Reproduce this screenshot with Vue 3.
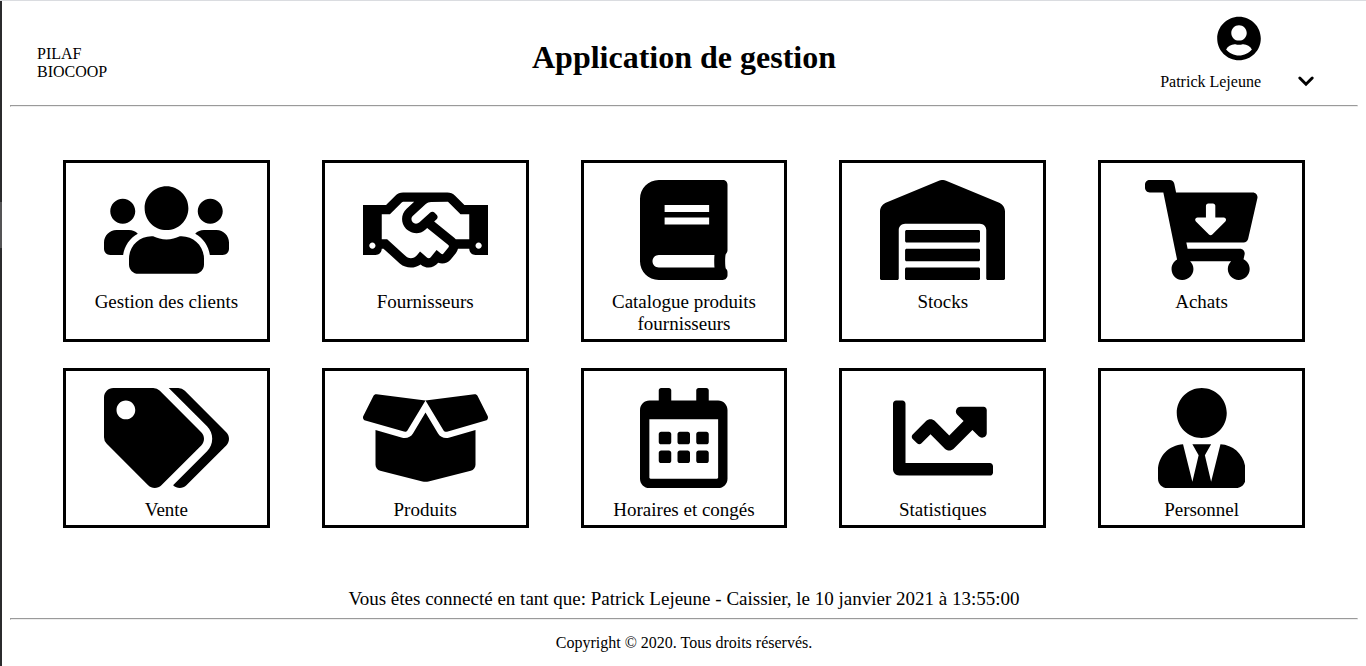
<script setup>
const tiles = [
  {
    label: 'Gestion des clients',
    box: '0 0 640 512',
    path: 'M96 224c35.3 0 64-28.7 64-64s-28.7-64-64-64-64 28.7-64 64 28.7 64 64 64zm448 0c35.3 0 64-28.7 64-64s-28.7-64-64-64-64 28.7-64 64 28.7 64 64 64zm32 32h-64c-17.6 0-33.5 7.1-45.1 18.6 40.3 22.1 68.9 62 75.1 109.4h66c17.7 0 32-14.3 32-32v-32c0-35.3-28.7-64-64-64zm-256 0c61.9 0 112-50.1 112-112S381.9 32 320 32 208 82.1 208 144s50.1 112 112 112zm76.8 32h-8.3c-20.8 10-43.9 16-68.5 16s-47.6-6-68.5-16h-8.3C179.6 288 128 339.6 128 403.2V432c0 26.5 21.5 48 48 48h288c26.5 0 48-21.5 48-48v-28.8c0-63.6-51.6-115.2-115.2-115.2zm-223.7-13.4C161.5 263.1 145.6 256 128 256H64c-35.3 0-64 28.7-64 64v32c0 17.7 14.3 32 32 32h65.9c6.3-47.4 34.9-87.3 75.2-109.4z',
  },
  {
    label: 'Fournisseurs',
    box: '0 0 640 512',
    path: 'M519.2 127.9l-47.6-47.6A56.252 56.252 0 0 0 432 64H205.2c-14.8 0-29.1 5.9-39.6 16.3L118 127.9H0v255.7h64c17.6 0 31.8-14.2 31.9-31.7h9.1l84.6 76.4c30.9 25.1 73.8 25.7 105.6 3.8 12.5 10.8 26 15.9 41.1 15.9 18.2 0 35.3-7.4 48.8-24 22.1 8.7 48.2 2.6 64-16.8l26.2-32.3c5.6-6.9 9.1-14.8 10.9-23h57.9c.1 17.5 14.4 31.7 31.9 31.7h64V127.9H519.2zM48 351.6c-8.8 0-16-7.2-16-16s7.2-16 16-16 16 7.2 16 16c0 8.9-7.2 16-16 16zm390-6.9l-26.1 32.2c-2.8 3.4-7.8 4-11.3 1.2l-23.9-19.4-30 36.5c-6 7.3-15 4.8-18 2.4l-36.8-31.5-15.6 19.2c-13.9 17.1-39.2 19.7-55.3 6.6l-97.3-88H96V175.8h41.9l61.7-61.6c2-.8 3.7-1.5 5.7-2.3H262l-38.7 35.5c-29.4 26.9-31.1 72.3-4.4 101.3 14.8 16.2 61.2 41.2 101.5 4.4l8.2-7.5 108.2 87.8c3.4 2.8 3.9 7.9 1.2 11.3zm106-40.8h-69.2c-2.3-2.8-4.9-5.4-7.7-7.7l-102.7-83.4 12.5-11.4c6.5-6 7-16.1 1-22.6L367 167.1c-6-6.5-16.1-6.9-22.6-1l-55.2 50.6c-9.5 8.7-25.7 9.4-34.6 0-9.3-9.9-8.5-25.1 1.2-33.9l65.6-60.2c7.4-6.8 17-10.5 27-10.5l83.7-.2c2.1 0 4.1.8 5.5 2.3l61.7 61.6H544v128zm48 47.7c-8.8 0-16-7.2-16-16s7.2-16 16-16 16 7.2 16 16c0 8.9-7.2 16-16 16z',
  },
  {
    label: 'Catalogue produits fournisseurs',
    box: '0 0 448 512',
    path: 'M448 360V24c0-13.3-10.7-24-24-24H96C43 0 0 43 0 96v320c0 53 43 96 96 96h328c13.3 0 24-10.7 24-24v-16c0-7.5-3.5-14.3-8.9-18.7-4.2-15.4-4.2-59.3 0-74.7 5.4-4.3 8.9-11.1 8.9-18.6zM126 128h228v36H126v-36zm0 64h228v36H126v-36zm255.4 256H96c-17.7 0-32-14.3-32-32 0-17.6 14.4-32 32-32h285.4c-1.9 17.1-1.9 46.9 0 64z',
  },
  {
    label: 'Stocks',
    box: '0 0 640 512',
    path: 'M504 352H136.4c-4.4 0-8 3.6-8 8l-.1 48c0 4.4 3.6 8 8 8H504c4.4 0 8-3.6 8-8v-48c0-4.4-3.6-8-8-8zm0 96H136.1c-4.4 0-8 3.6-8 8l-.1 48c0 4.4 3.6 8 8 8h368c4.4 0 8-3.6 8-8v-48c0-4.4-3.6-8-8-8zm0-192H136.6c-4.4 0-8 3.6-8 8l-.1 48c0 4.4 3.6 8 8 8H504c4.4 0 8-3.6 8-8v-48c0-4.4-3.6-8-8-8zm106.5-139L338.4 3.7a48.15 48.15 0 0 0-36.9 0L29.5 117C11.7 124.5 0 141.9 0 161.3V504c0 4.4 3.6 8 8 8h80c4.4 0 8-3.6 8-8V256c0-17.6 14.6-32 32.6-32h382.8c18 0 32.6 14.4 32.6 32v248c0 4.4 3.6 8 8 8h80c4.4 0 8-3.6 8-8V161.3c0-19.4-11.7-36.8-29.5-44.3z',
  },
  {
    label: 'Achats',
    box: '0 0 576 512',
    path: 'M504.717 320H211.572l6.545 32h268.418c15.401 0 26.816 14.301 23.403 29.319l-5.517 24.276C523.112 414.668 536 433.828 536 456c0 31.202-25.519 56.444-56.824 55.994-29.823-.429-54.35-24.631-55.155-54.447-.44-16.287 6.085-31.049 16.803-41.548H231.176C241.553 426.165 248 440.326 248 456c0 31.813-26.528 57.431-58.67 55.938-28.54-1.325-51.751-24.385-53.251-52.917-1.158-22.034 10.436-41.455 28.051-51.586L93.883 64H24C10.745 64 0 53.255 0 40V24C0 10.745 10.745 0 24 0h102.529c11.401 0 21.228 8.021 23.513 19.19L159.208 64H551.99c15.401 0 26.816 14.301 23.403 29.319l-47.273 208C525.637 312.246 515.923 320 504.717 320zM403.029 192H360v-60c0-6.627-5.373-12-12-12h-24c-6.627 0-12 5.373-12 12v60h-43.029c-10.691 0-16.045 12.926-8.485 20.485l67.029 67.029c4.686 4.686 12.284 4.686 16.971 0l67.029-67.029c7.559-7.559 2.205-20.485-8.486-20.485z',
  },
  {
    label: 'Vente',
    box: '0 0 640 512',
    path: 'M497.941 225.941L286.059 14.059A48 48 0 0 0 252.118 0H48C21.49 0 0 21.49 0 48v204.118a48 48 0 0 0 14.059 33.941l211.882 211.882c18.744 18.745 49.136 18.746 67.882 0l204.118-204.118c18.745-18.745 18.745-49.137 0-67.882zM112 160c-26.51 0-48-21.49-48-48s21.49-48 48-48 48 21.49 48 48-21.49 48-48 48zm513.941 133.823L421.823 497.941c-18.745 18.745-49.137 18.745-67.882 0l-.36-.36L527.64 323.522c16.999-16.999 26.36-39.6 26.36-63.64s-9.362-46.641-26.36-63.64L331.397 0h48.721a48 48 0 0 1 33.941 14.059l211.882 211.882c18.745 18.745 18.745 49.137 0 67.882z',
  },
  {
    label: 'Produits',
    box: '0 0 640 512',
    path: 'M425.7 256c-16.9 0-32.8-9-41.4-23.4L320 126l-64.2 106.6c-8.7 14.5-24.6 23.5-41.5 23.5-4.5 0-9-.6-13.3-1.9L64 215v178c0 14.7 10 27.5 24.2 31l216.2 54.1c10.2 2.5 20.9 2.5 31 0L551.8 424c14.2-3.6 24.2-16.4 24.2-31V215l-137 39.1c-4.3 1.3-8.8 1.9-13.3 1.9zm212.6-112.2L586.8 41c-3.1-6.2-9.8-9.8-16.7-8.9L320 64l91.7 152.1c3.8 6.3 11.4 9.3 18.5 7.3l197.9-56.5c9.9-2.9 14.7-13.9 10.2-23.1zM53.2 41L1.7 143.8c-4.6 9.2.3 20.2 10.1 23l197.9 56.5c7.1 2 14.7-1 18.5-7.3L320 64 69.8 32.1c-6.9-.8-13.5 2.7-16.6 8.9z',
  },
  {
    label: 'Horaires et congés',
    box: '0 0 448 512',
    path: 'M148 288h-40c-6.6 0-12-5.4-12-12v-40c0-6.6 5.4-12 12-12h40c6.6 0 12 5.4 12 12v40c0 6.6-5.4 12-12 12zm96 0h-40c-6.6 0-12-5.4-12-12v-40c0-6.6 5.4-12 12-12h40c6.6 0 12 5.4 12 12v40c0 6.6-5.4 12-12 12zm96 0h-40c-6.6 0-12-5.4-12-12v-40c0-6.6 5.4-12 12-12h40c6.6 0 12 5.4 12 12v40c0 6.6-5.4 12-12 12zm-192 96h-40c-6.6 0-12-5.4-12-12v-40c0-6.6 5.4-12 12-12h40c6.6 0 12 5.4 12 12v40c0 6.6-5.4 12-12 12zm96 0h-40c-6.6 0-12-5.4-12-12v-40c0-6.6 5.4-12 12-12h40c6.6 0 12 5.4 12 12v40c0 6.6-5.4 12-12 12zm96 0h-40c-6.6 0-12-5.4-12-12v-40c0-6.6 5.4-12 12-12h40c6.6 0 12 5.4 12 12v40c0 6.6-5.4 12-12 12zM400 64h-48V12c0-6.6-5.4-12-12-12h-40c-6.6 0-12 5.4-12 12v52H160V12c0-6.6-5.4-12-12-12h-40c-6.6 0-12 5.4-12 12v52H48C21.5 64 0 85.5 0 112v352c0 26.5 21.5 48 48 48h352c26.5 0 48-21.5 48-48V112c0-26.5-21.5-48-48-48zm-6 400H54c-3.3 0-6-2.7-6-6V160h352v298c0 3.3-2.7 6-6 6z',
  },
  {
    label: 'Statistiques',
    box: '0 0 512 512',
    path: 'M496 384H64V80c0-8.84-7.16-16-16-16H16C7.16 64 0 71.16 0 80v336c0 17.67 14.33 32 32 32h464c8.84 0 16-7.16 16-16v-32c0-8.84-7.16-16-16-16zM464 96H345.94c-21.38 0-32.09 25.85-16.97 40.97l32.4 32.4L288 242.75l-73.37-73.37c-12.5-12.5-32.76-12.5-45.25 0l-68.69 68.69c-6.25 6.25-6.25 16.38 0 22.63l22.62 22.62c6.25 6.25 16.38 6.25 22.63 0L192 237.25l73.37 73.37c12.5 12.5 32.76 12.5 45.25 0l96-96 32.4 32.4c15.12 15.12 40.97 4.41 40.97-16.97V112c.01-8.84-7.15-16-15.99-16z',
  },
  {
    label: 'Personnel',
    box: '0 0 448 512',
    path: 'M224 256c70.7 0 128-57.3 128-128S294.7 0 224 0 96 57.3 96 128s57.3 128 128 128zm95.8 32.6L272 480l-32-136 32-56h-96l32 56-32 136-47.8-191.4C56.9 292 0 350.3 0 422.4V464c0 26.5 21.5 48 48 48h352c26.5 0 48-21.5 48-48v-41.6c0-72.1-56.9-130.4-128.2-133.8z',
  },
]
</script>

<template>
  <div class="page">
    <header class="header">
      <div class="brand">PILAF<br />BIOCOOP</div>
      <h1 class="title">Application de gestion</h1>
      <div class="account">
        <div class="user">
          <svg class="avatar" viewBox="0 0 496 512" aria-hidden="true">
            <path
              d="M248 8C111 8 0 119 0 256s111 248 248 248 248-111 248-248S385 8 248 8zm0 96c48.6 0 88 39.4 88 88s-39.4 88-88 88-88-39.4-88-88 39.4-88 88-88zm0 344c-58.7 0-111.3-26.6-146.5-68.2 18.8-35.4 55.6-59.8 98.5-59.8 2.4 0 4.8.4 7.1 1.1 13 4.2 26.6 6.9 40.9 6.9 14.3 0 28-2.7 40.9-6.9 2.3-.7 4.7-1.1 7.1-1.1 42.9 0 79.7 24.4 98.5 59.8C359.3 421.4 306.7 448 248 448z"
            />
          </svg>
          <span class="user-name">Patrick Lejeune</span>
        </div>
        <button class="menu-button" type="button" aria-label="Menu utilisateur">
          <svg class="chevron" viewBox="0 0 30 30" aria-hidden="true">
            <path d="M8.8 12L15 18.2 21.2 12" />
          </svg>
        </button>
      </div>
    </header>
    <hr class="rule" />
    <main>
      <nav class="tiles">
        <a v-for="tile in tiles" :key="tile.label" class="tile" href="#">
          <svg class="tile-icon" :viewBox="tile.box" aria-hidden="true">
            <path :d="tile.path" />
          </svg>
          <span class="tile-label">{{ tile.label }}</span>
        </a>
      </nav>
      <p class="status">
        Vous êtes connecté en tant que: Patrick Lejeune - Caissier, le 10 janvier 2021 à 13:55:00
      </p>
    </main>
    <hr class="rule" />
    <footer class="footer">Copyright © 2020. Tous droits réservés.</footer>
  </div>
</template>

<style>
body {
  background: #fff;
}
</style>

<style scoped>
.page {
  box-sizing: border-box;
  min-height: 100vh;
  padding: 0 8px 0 10px;
  border-top: 1px solid #dadce0;
  background: linear-gradient(#2b2b2d 201px, #545456 201px, #545456 247px, #2b2b2d 247px) left top / 2px 100% no-repeat;
  color: #000;
  font-family: "Liberation Serif", "Times New Roman", serif;
  font-size: 16px;
  line-height: 18px;
}

.header {
  display: grid;
  grid-template-columns: 1fr auto 1fr;
  height: 104px;
}

.brand {
  padding: 44px 0 0 27px;
}

.title {
  margin: 0;
  padding-top: 38px;
  font-size: 32px;
  line-height: 36px;
}

.account {
  display: flex;
  justify-content: flex-end;
  align-items: flex-start;
  gap: 30px;
  padding: 15px 37px 0 0;
}

.user {
  display: flex;
  flex-direction: column;
  align-items: flex-end;
  gap: 12px;
}

.avatar {
  display: block;
  width: 44px;
  height: 45px;
}

.menu-button {
  display: block;
  margin-top: 50px;
  padding: 0;
  border: 0;
  background: none;
  cursor: pointer;
}

.chevron {
  display: block;
  width: 30px;
  height: 30px;
  fill: none;
  stroke: #000;
  stroke-width: 3;
  stroke-linecap: round;
}

.rule {
  margin: 0;
  border: 1px solid;
  border-color: #9a9a9a #eee #eee #9a9a9a;
}

.tiles {
  display: grid;
  grid-template-columns: repeat(5, 1fr);
  gap: 26px 52px;
  padding: 53px 53px 0;
}

.tile {
  display: flex;
  flex-direction: column;
  align-items: center;
  gap: 11px;
  padding: 17px 8px 4px;
  border: 3px solid #000;
  color: inherit;
  font-size: 19px;
  line-height: 22px;
  text-align: center;
  text-decoration: none;
}

.tile-icon {
  display: block;
  height: 100px;
}

.status {
  margin: 0;
  padding: 60px 0 8px;
  font-size: 19px;
  line-height: 22px;
  text-align: center;
}

.footer {
  padding: 14px 0 16px;
  text-align: center;
}
</style>
